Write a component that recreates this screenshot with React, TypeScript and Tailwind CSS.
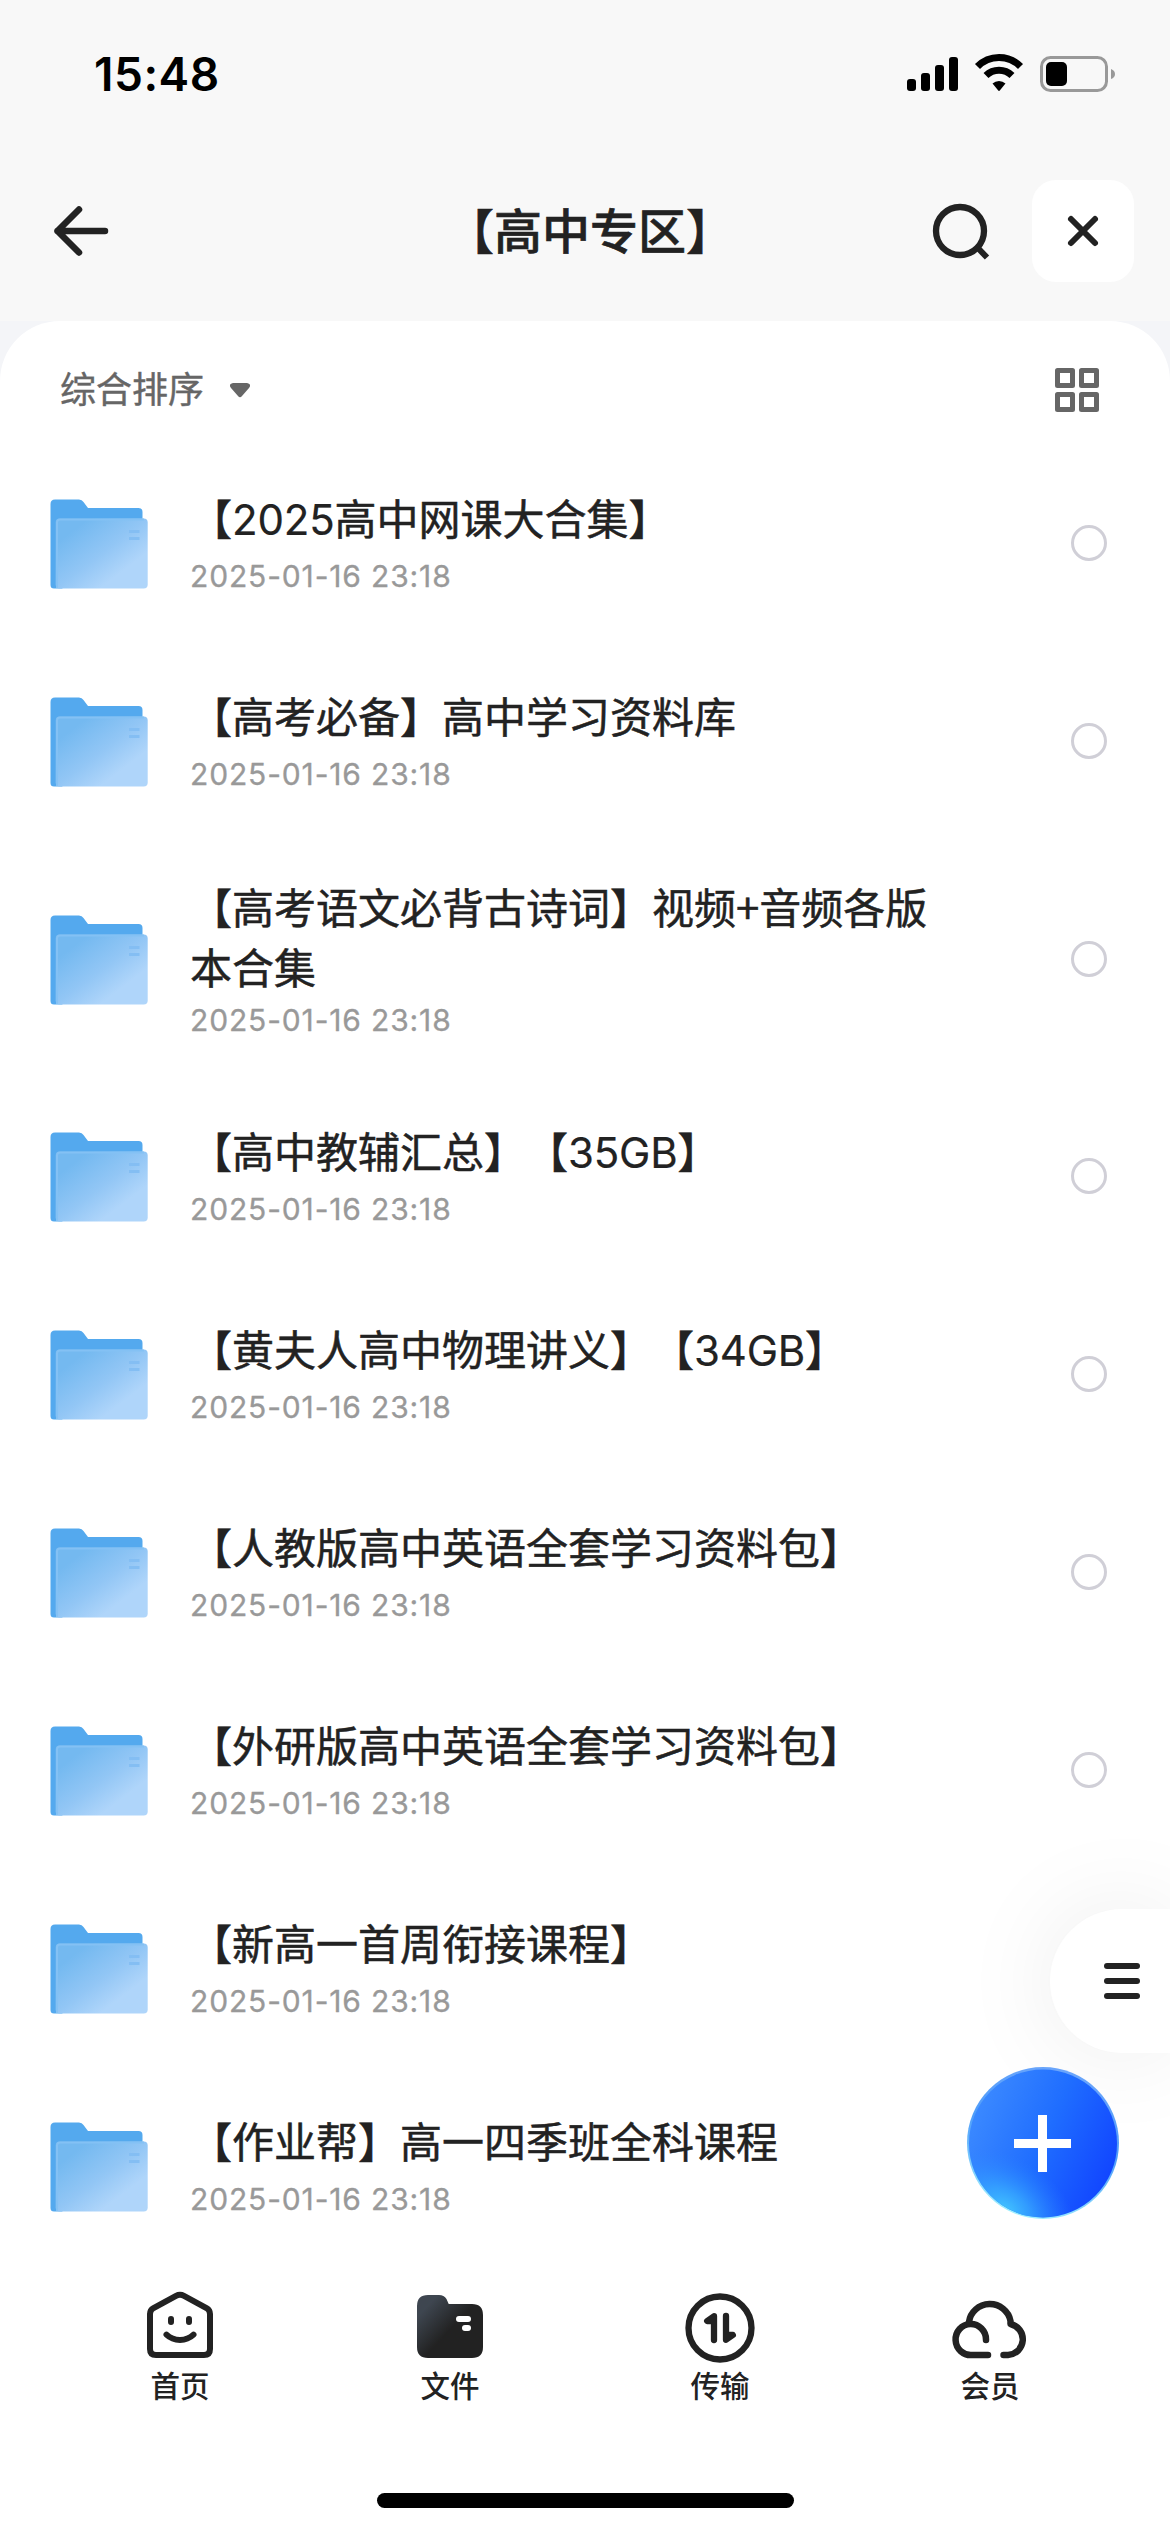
import type { ReactNode } from "react";

type FileItem = {
  name: string;
  date: string;
  long?: boolean;
};

const files: FileItem[] = [
  { name: "【2025高中网课大合集】", date: "2025-01-16 23:18" },
  { name: "【高考必备】高中学习资料库", date: "2025-01-16 23:18" },
  {
    name: "【高考语文必背古诗词】视频+音频各版本合集",
    date: "2025-01-16 23:18",
    long: true,
  },
  { name: "【高中教辅汇总】【35GB】", date: "2025-01-16 23:18" },
  { name: "【黄夫人高中物理讲义】【34GB】", date: "2025-01-16 23:18" },
  { name: "【人教版高中英语全套学习资料包】", date: "2025-01-16 23:18" },
  { name: "【外研版高中英语全套学习资料包】", date: "2025-01-16 23:18" },
  { name: "【新高一首周衔接课程】", date: "2025-01-16 23:18" },
  { name: "【作业帮】高一四季班全科课程", date: "2025-01-16 23:18" },
];

const StatusBar = () => (
  <div className="flex h-[141px] shrink-0 items-start justify-between pt-[46px] pr-[54px] pl-[94px]">
    <span className="font-['Inter',sans-serif] text-[46px] leading-[56px] font-semibold tracking-[0.5px] text-black">
      15:48
    </span>
    <svg className="mt-[6px]" width="210" height="44" viewBox="0 0 210 44">
      <rect x="1" y="27" width="9" height="12" rx="3" />
      <rect x="15" y="21" width="9" height="18" rx="3" />
      <rect x="29" y="13" width="9" height="26" rx="3" />
      <rect x="43" y="5" width="9" height="34" rx="3" />
      <path d="M71.500 14.500A30 30 0 0 1 114.500 14.500" fill="none" stroke="#000" strokeWidth="7" />
      <path d="M80 23.500A18.500 18.500 0 0 1 106 23.500" fill="none" stroke="#000" strokeWidth="7" />
      <path d="M86.500 31.500A9.500 9.500 0 0 1 99.500 31.500L94 38.300Q93 39.500 92 38.300Z" />
      <rect x="135.500" y="5.500" width="65" height="33" rx="9" fill="none" stroke="#999" strokeWidth="3" />
      <rect x="140" y="10" width="21" height="24" rx="5" />
      <path d="M205 17Q209 18.500 209 22T205 27Z" fill="#999" />
    </svg>
  </div>
);

const Header = () => (
  <header className="flex h-[180px] shrink-0 items-start justify-between pt-[39px] pr-9 pl-12">
    <button className="flex h-[102px] w-[198px] items-center">
      <svg width="66" height="60" viewBox="0 0 66 60" fill="none" stroke="#222" strokeWidth="6.500" strokeLinecap="round" strokeLinejoin="round">
        <path d="M57 30H9.500M31 8.500L9.500 30L31 51.500" />
      </svg>
    </button>
    <h1 className="-mt-[3px] -mr-[3px] pl-1 text-[48px] leading-[102px] font-medium text-[#222] [-webkit-text-stroke:0.6px]">
      【高中专区】
    </h1>
    <div className="flex items-center gap-[39px]">
      <button className="flex h-[102px] items-center">
        <svg width="66" height="66" viewBox="0 0 66 66" fill="none" stroke="#222" strokeWidth="6.300">
          <circle cx="33" cy="33" r="24" />
          <path d="M49 48L60 59.500" strokeWidth="6" />
        </svg>
      </button>
      <button className="flex size-[102px] items-center justify-center rounded-[24px] bg-white">
        <svg width="36" height="36" viewBox="0 0 36 36" fill="none" stroke="#222" strokeWidth="6" strokeLinecap="round">
          <path d="M6 6L30 30M30 6L6 30" />
        </svg>
      </button>
    </div>
  </header>
);

const SortBar = () => (
  <div className="flex h-[123px] items-center justify-between pt-[15px] pr-[71px] pl-[60px]">
    <div className="flex items-center gap-[26px]">
      <span className="-mt-1.5 text-[36px] leading-[54px] text-[#666] [-webkit-text-stroke:0.4px]">
        综合排序
      </span>
      <svg className="mt-px" width="20" height="15" viewBox="0 0 20 15" fill="#666">
        <path d="M3 0H17Q22 1 19 5L12 13Q10 15.500 8 13L1 5Q-2 1 3 0Z" />
      </svg>
    </div>
    <svg width="44" height="44" viewBox="0 0 44 44" fill="none" stroke="#666" strokeWidth="5" strokeLinejoin="round">
      <rect x="2.500" y="2.500" width="15" height="15" />
      <rect x="26.500" y="2.500" width="15" height="15" />
      <rect x="2.500" y="26.500" width="15" height="15" />
      <rect x="26.500" y="26.500" width="15" height="15" />
    </svg>
  </div>
);

const FolderIcon = () => (
  <svg className="mt-[2px] shrink-0" width="98" height="90" viewBox="0 0 98 90">
    <defs>
      <linearGradient id="front" x1="0.100" y1="0.100" x2="0.900" y2="0.900">
        <stop offset="0.100" stopColor="#74b9f0" />
        <stop offset="0.500" stopColor="#92c6f5" />
        <stop offset="0.800" stopColor="#afd5fa" />
      </linearGradient>
    </defs>
    <path d="M0.500 5Q0.500 0.500 5 0.500H29Q32 0.500 33.500 3L38 9H88.500Q92.500 9 92.500 13V40L12 89.500H4Q0.500 89.500 0.500 86Z" fill="#54a9ee" />
    <rect x="5.700" y="19.500" width="92" height="70" rx="4" fill="url(#front)" />
    <path d="M7 89V23.500Q7 20.500 10 20.500H94" fill="none" stroke="#84c1f4" strokeWidth="2" />
    <path d="M79 32.500H89.500M79 39.500H89.500" stroke="#84bef3" strokeWidth="3.200" />
  </svg>
);

const FileRow = ({ name, date, long }: FileItem) => (
  <li className={`flex items-center pr-[63px] pl-[50px] ${long ? "h-[237px]" : "h-[198px]"}`}>
    <FolderIcon />
    <div className={`ml-[42px] w-[760px] ${long ? "-mt-[3px]" : "-mt-[5px]"}`}>
      <p className="text-[42px] leading-[60px] text-[#222] [text-spacing-trim:space-all] [-webkit-text-stroke:0.5px]">
        {name.split(/([0-9A-Z]+)/).map((part, i) =>
          i % 2 ? (
            <span key={i} className="font-['Inter',sans-serif] leading-none tracking-[-0.2px] [-webkit-text-stroke:0.2px]">
              {part}
            </span>
          ) : (
            part
          )
        )}
      </p>
      <p
        className={`font-['Inter',sans-serif] text-[30px] leading-[36px] tracking-[0.85px] text-[#999] [-webkit-text-stroke:0.3px] ${
          long ? "mt-[6px]" : "mt-[11px]"
        }`}
      >
        {date}
      </p>
    </div>
    <span className="ml-auto size-9 rounded-full border-[3px] border-[#d0cfd7]" />
  </li>
);

const HomeIcon = () => (
  <g fill="none" stroke="#222" strokeWidth="6" strokeLinecap="round">
    <path d="M10 24Q10 20 13.500 18L36 5.800Q40 3.700 44 5.800L66.500 18Q70 20 70 24V59Q70 65 64 65H16Q10 65 10 59Z" />
    <path d="M31 29V32M49 29V32" />
    <path d="M26.500 44.700Q32 50 40 50T53.500 44.700" />
  </g>
);

const FilesIcon = () => (
  <>
    <defs>
      <linearGradient id="files" x1="0" y1="0.100" x2="0.500" y2="0.550">
        <stop offset="0.250" stopColor="#3e4650" />
        <stop offset="1" stopColor="#222" />
      </linearGradient>
    </defs>
    <path d="M7 16Q7 5 18 5H29Q34 5 36.500 9L38.700 14H62Q73 14 73 25V57Q73 68 62 68H18Q7 68 7 57Z" fill="url(#files)" />
    <rect x="46" y="26" width="15" height="6" rx="3" fill="#fff" />
    <rect x="52" y="35" width="9" height="6" rx="3" fill="#fff" />
  </>
);

const TransferIcon = () => (
  <g stroke="#222" strokeWidth="6.300" strokeLinecap="round" strokeLinejoin="round">
    <circle cx="40" cy="38" r="31.500" fill="none" />
    <path d="M34 50V26.200L27.200 31H34" fill="#222" />
    <path d="M46 26V49.800L52.800 45H46" fill="#222" />
  </g>
);

const MemberIcon = () => (
  <g fill="none" stroke="#222" strokeWidth="6.500" strokeLinecap="round" strokeLinejoin="round">
    <path d="M38 65H22A15.200 15.500 0 1 1 36 49.500V50" />
    <path d="M19 32A21 20.500 0 0 1 60.500 31V34A15.700 15.700 0 0 1 58 65H53.500" />
  </g>
);

const tabs: { label: string; icon: ReactNode }[] = [
  { label: "首页", icon: <HomeIcon /> },
  { label: "文件", icon: <FilesIcon /> },
  { label: "传输", icon: <TransferIcon /> },
  { label: "会员", icon: <MemberIcon /> },
];

const TabBar = () => (
  <nav className="flex h-[267px] shrink-0 flex-col items-center justify-between bg-white pt-[25px] pb-6">
    <div className="flex w-full px-[45px]">
      {tabs.map((tab) => (
        <button key={tab.label} className="flex flex-1 flex-col items-center">
          <svg width="80" height="76" viewBox="0 0 80 76">
            {tab.icon}
          </svg>
          <span className="-mt-[2px] text-[29.500px] leading-[40px] font-medium text-[#222]">
            {tab.label}
          </span>
        </button>
      ))}
    </div>
    <div className="h-[15px] w-[417px] rounded-full bg-black" />
  </nav>
);

const SideTab = () => (
  <button className="absolute top-[1909px] right-0 flex h-36 w-[120px] flex-col justify-center gap-[9px] rounded-l-[72px] bg-white pl-[54px] shadow-[0_0_100px_rgba(0,0,0,0.08)]">
    <span className="h-1.5 w-9 rounded-full bg-[#222]" />
    <span className="h-1.5 w-9 rounded-full bg-[#222]" />
    <span className="h-1.5 w-9 rounded-full bg-[#222]" />
  </button>
);

const AddButton = () => (
  <button className="absolute top-[2067px] left-[967px] size-[152px]">
    <svg width="152" height="152" viewBox="0 0 152 152">
      <defs>
        <linearGradient id="add" x1="0.050" y1="0.300" x2="0.950" y2="0.700">
          <stop offset="0" stopColor="#3a88ff" />
          <stop offset="0.500" stopColor="#1f6dff" />
          <stop offset="1" stopColor="#1247ff" />
        </linearGradient>
        <radialGradient id="glow" gradientUnits="userSpaceOnUse" cx="0" cy="0" r="1" gradientTransform="translate(38 142) rotate(32) scale(78 52)">
          <stop offset="0" stopColor="#42c4ff" />
          <stop offset="0.350" stopColor="#38acff" stopOpacity="0.750" />
          <stop offset="1" stopColor="#2a80ff" stopOpacity="0" />
        </radialGradient>
        <linearGradient id="rim" x1="0.600" y1="0" x2="0.300" y2="1">
          <stop offset="0" stopColor="#6ba5fb" />
          <stop offset="0.450" stopColor="#4e9dfa" />
          <stop offset="1" stopColor="#a4f5ff" />
        </linearGradient>
      </defs>
      <circle cx="76" cy="76" r="76" fill="url(#rim)" />
      <circle cx="76" cy="76.500" r="74" fill="url(#add)" />
      <circle cx="76" cy="76.500" r="74" fill="url(#glow)" />
      <path d="M47 76.500H104M75.500 48V105" stroke="#fff" strokeWidth="9" />
    </svg>
  </button>
);

export default function App() {
  return (
    <div className="relative flex h-[2532px] w-[1170px] flex-col overflow-hidden bg-[#f8f8f8] font-['Noto_Sans_CJK_SC',sans-serif]">
      <StatusBar />
      <Header />
      <div className="flex-1 bg-[#f4f5f8]">
        <main className="h-full rounded-t-[60px] bg-white">
          <SortBar />
          <ul>
            {files.map((file) => (
              <FileRow key={file.name} {...file} />
            ))}
          </ul>
        </main>
      </div>
      <TabBar />
      <SideTab />
      <AddButton />
    </div>
  );
}
